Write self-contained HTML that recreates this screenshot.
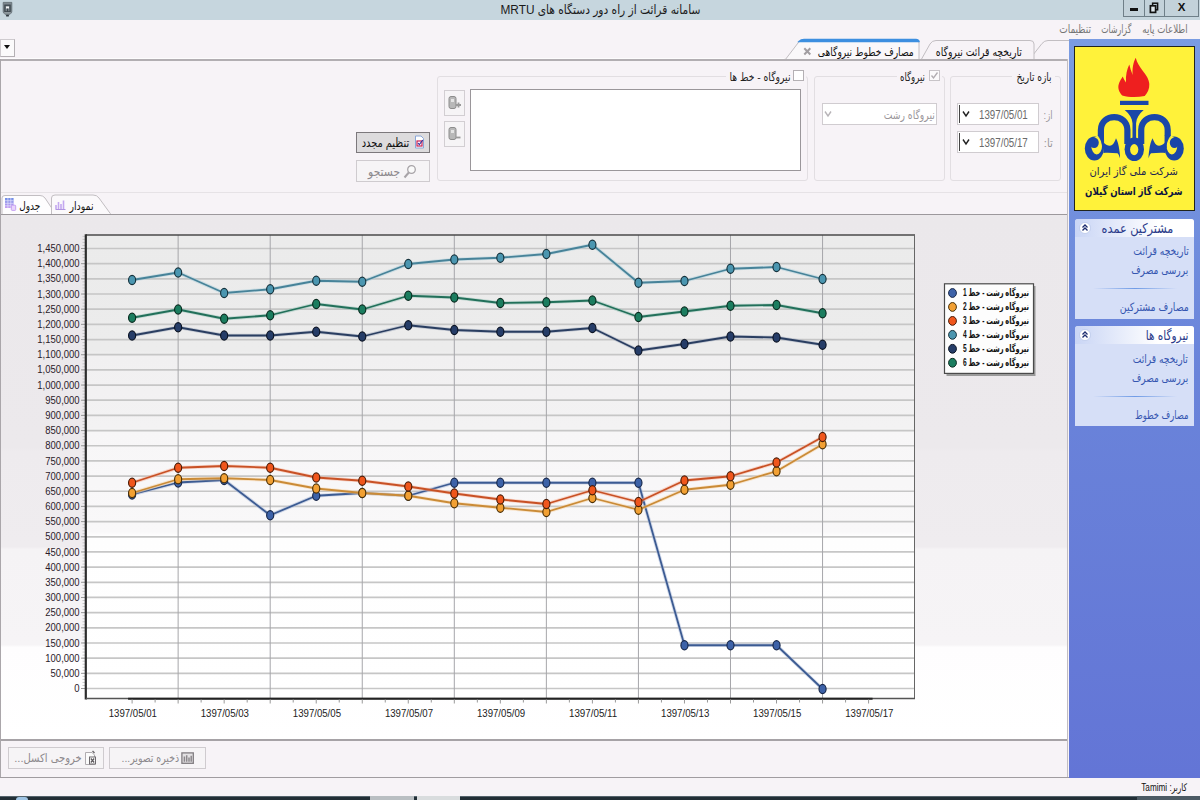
<!DOCTYPE html>
<html lang="fa">
<head>
<meta charset="utf-8">
<title>سامانه قرائت از راه دور دستگاه های MRTU</title>
<style>
html,body{margin:0;padding:0;}
body{width:1200px;height:800px;overflow:hidden;background:#f7f3f7;position:relative;
 font-family:"Liberation Sans","DejaVu Sans",sans-serif;font-size:11px;color:#222;}
.abs{position:absolute;}
.t{white-space:nowrap;height:16px;line-height:16px;font-size:11px;font-family:"Liberation Sans","DejaVu Sans Condensed","DejaVu Sans",sans-serif;}
.r{direction:rtl;transform-origin:100% 50%;}
.l{direction:ltr;transform-origin:0 50%;}
.rtl{direction:rtl;unicode-bidi:embed;}
.fa{font-family:"Liberation Sans","DejaVu Sans Condensed","DejaVu Sans",sans-serif;}
#titlebar{left:0;top:0;width:1200px;height:19.5px;background:#c6d6de;}
#title{left:400px;top:1px;width:400px;height:18px;line-height:18px;text-align:center;font-size:12px;color:#1a1a1a;direction:rtl;}
.wbtn{top:0;height:17px;background:#c3d2da;border:1px solid #6f7f88;border-top:none;box-sizing:border-box;}
#menubar{left:0;top:20px;width:1200px;height:18px;background:#f7f3f7;}
.menu{top:21px;height:16px;line-height:16px;font-size:11px;color:#777;direction:rtl;white-space:nowrap;}
#sidebar{left:1069.3px;top:39px;width:131px;height:739px;background:linear-gradient(#7a9ce2,#6a84da 45%,#6375d6);}
#logo{left:1074.3px;top:46px;width:120.5px;height:165.2px;background:#fff23a;border:1.4px solid #20241c;box-sizing:border-box;}
.panel{left:1075px;width:119px;background:#d6dff7;border-radius:3px 3px 0 0;}
.phead{left:0;top:0;width:119px;height:18px;border-radius:3px 3px 0 0;background:linear-gradient(to left,#ffffff,#ffffff 30%,#c9d5f5);}
.ptitle{right:6px;top:0;height:18px;line-height:18px;font-size:12px;color:#27408f;direction:rtl;white-space:nowrap;}
.pitem{right:6px;height:16px;line-height:16px;font-size:11px;color:#2f52b0;direction:rtl;white-space:nowrap;}
.psep{left:18px;width:84px;height:1px;background:linear-gradient(to right,rgba(120,160,230,0),#6f9be6,rgba(120,160,230,0));}
#statusbar{left:0;top:778px;width:1200px;height:18px;background:#f7f3f7;}
#taskbar{left:0;top:795.6px;width:1200px;height:4.4px;background:#222e36;border-top:1px solid #55636c;box-sizing:border-box;}
.gb{border:1px solid #e2dee2;border-radius:3px;box-sizing:border-box;}
.gbt{background:#f7f3f7;font-size:11px;color:#222;direction:rtl;white-space:nowrap;height:14px;line-height:14px;padding:0 2px;}
.inp{background:#fff;border:1px solid #d0ccd0;box-sizing:border-box;}
.btn{box-sizing:border-box;font-size:12px;direction:rtl;white-space:nowrap;text-align:center;}
svg.chart{position:absolute;left:0;top:0;}
svg.chart text{font-family:"Liberation Sans","DejaVu Sans",sans-serif;}
.yl{font-size:10px;fill:#2a1a2a;}
.xl{font-size:10px;fill:#222;}
.lg{font-size:10px;font-weight:bold;fill:#111;font-family:"Liberation Sans","DejaVu Sans Condensed","DejaVu Sans",sans-serif;}
</style>
</head>
<body>
<!-- title bar -->
<div id="titlebar" class="abs"></div>
<div class="abs t r" style="right:500px;top:2px;font-size:12px;color:#1a1a1a;transform:scale(0.988,1.06)">سامانه قرائت از راه دور دستگاه های MRTU</div>
<svg class="abs" style="left:0px;top:0px" width="16" height="19" viewBox="0 0 16 19"><path d="M3.2 2.4 H11.8 V11.5 C11.8 13.5 9.8 14.6 7.5 14.8 C5.2 14.6 3.2 13.5 3.2 11.5 Z" fill="#7d888f" stroke="#5d686f" stroke-width="0.8"/><rect x="4.9" y="5.2" width="5.2" height="6.6" fill="none" stroke="#3e484f" stroke-width="1.3"/><rect x="6" y="6.5" width="3" height="2" fill="#f4f6f7"/><rect x="6.9" y="8.6" width="1.3" height="3.2" fill="#3e484f"/><rect x="4.2" y="12" width="6.6" height="1.6" fill="#8f9aa0"/><ellipse cx="7.5" cy="15.7" rx="1.6" ry="0.9" fill="#2e383f"/></svg>
<div class="abs wbtn" style="left:1123px;width:22px;"></div>
<div class="abs wbtn" style="left:1144px;width:21px;"></div>
<div class="abs wbtn" style="left:1164px;width:35px;"></div>
<div class="abs" style="left:1130px;top:8px;width:8px;height:3px;background:#111;"></div>
<svg class="abs" style="left:1148px;top:1px" width="12" height="13" viewBox="0 0 12 13"><rect x="4.6" y="2.2" width="5" height="6.6" fill="none" stroke="#111" stroke-width="1.5"/><rect x="2.4" y="4.8" width="5.2" height="6.6" fill="#dfe7ec" stroke="#111" stroke-width="1.7"/></svg>
<div class="abs" style="left:1175px;top:0px;width:13px;height:15px;line-height:15px;font-size:11px;font-weight:bold;color:#111;text-align:center;transform:scale(1.05,0.95)">X</div>

<!-- menu bar -->
<div id="menubar" class="abs"></div>
<div class="abs t r" style="right:12px;top:21px;color:#747474;transform:scale(0.877,1.05)">اطلاعات پایه</div>
<div class="abs t r" style="right:68.7px;top:21px;color:#747474;transform:scale(0.783,1.05)">گزارشات</div>
<div class="abs t r" style="right:109.6px;top:21px;color:#747474;transform:scale(0.908,1.05)">تنظیمات</div>

<!-- sidebar -->
<div id="sidebar" class="abs"></div>
<div id="logo" class="abs"></div>
<svg class="abs" style="left:1075px;top:47px" width="120" height="163" viewBox="0 0 120 163">
 <path d="M47.2 48.5 C44 45 42.5 41 43.8 37 C44.5 34 46.5 32 47.7 29.5 C48.5 31.5 49.5 33.5 51 35.5 C50.5 28 52 22 54.3 17.5 C55 21 56.3 24.5 57.7 28 C57 21 58.5 15 60.7 10.7 C62 16 65 20 67.5 23.5 C71 28 74 32 74.3 37 C74.6 42 72.5 46 69.7 49 C62 50.6 54 50.5 47.2 48.5 Z" fill="#ee1f1f"/>
 <rect x="45" y="53.8" width="28.5" height="4.2" fill="#1a47a8"/>
 <path d="M49.7 63 L68.7 63 C64 67 61.5 71 61.1 76.3 L61.1 92 L57.5 92 L57.5 76.3 C57.1 71 54.5 67 49.7 63 Z" fill="#1a47a8"/>
 <g>
  <ellipse cx="19.4" cy="101.5" rx="9.6" ry="12" fill="#1a47a8"/>
  <ellipse cx="21.7" cy="98.6" rx="5.4" ry="8.8" fill="#fff23a"/>
  <ellipse cx="19.2" cy="95.7" rx="4.6" ry="5.2" fill="#1a47a8"/>
  <path d="M25.9 88.5 L25.9 83 C25.9 65.8 52.4 65.8 52.4 83 L52.4 97" fill="none" stroke="#1a47a8" stroke-width="6.2"/>
  <path d="M22.8 88 L29 88 L29.1 101 L27.1 101 C27.2 96.5 25.6 91.5 22.8 88.8 Z" fill="#1a47a8"/>
  <path d="M28.5 95.5 C32 99 35 99.5 37 98 C39 96.5 40 94 41 91.3 C42.5 94 43.8 98 44.3 103 C44.8 106 45.2 109 45 111.2 C44.2 108.8 43.5 107 42.5 106.3 C38 106 33 105.6 28.5 106 Z" fill="#1a47a8"/>
 </g>
 <g transform="translate(118.6,0) scale(-1,1)">
  <ellipse cx="19.4" cy="101.5" rx="9.6" ry="12" fill="#1a47a8"/>
  <ellipse cx="21.7" cy="98.6" rx="5.4" ry="8.8" fill="#fff23a"/>
  <ellipse cx="19.2" cy="95.7" rx="4.6" ry="5.2" fill="#1a47a8"/>
  <path d="M25.9 88.5 L25.9 83 C25.9 65.8 52.4 65.8 52.4 83 L52.4 97" fill="none" stroke="#1a47a8" stroke-width="6.2"/>
  <path d="M22.8 88 L29 88 L29.1 101 L27.1 101 C27.2 96.5 25.6 91.5 22.8 88.8 Z" fill="#1a47a8"/>
  <path d="M28.5 95.5 C32 99 35 99.5 37 98 C39 96.5 40 94 41 91.3 C42.5 94 43.8 98 44.3 103 C44.8 106 45.2 109 45 111.2 C44.2 108.8 43.5 107 42.5 106.3 C38 106 33 105.6 28.5 106 Z" fill="#1a47a8"/>
 </g>
 <ellipse cx="59.3" cy="102.3" rx="9.7" ry="11.8" fill="#1a47a8"/>
 <ellipse cx="59.2" cy="102.6" rx="4.1" ry="5.6" fill="#fff036"/>
 <text x="103" y="127.5" text-anchor="start" font-size="11" fill="#1c2450" direction="rtl" textLength="88.5" lengthAdjust="spacingAndGlyphs" style="font-family:'Liberation Sans','DejaVu Sans Condensed','DejaVu Sans',sans-serif">شرکت ملی گاز ایران</text>
 <text x="107.5" y="148" text-anchor="start" font-size="11" font-weight="bold" fill="#0c1440" direction="rtl" textLength="97.5" lengthAdjust="spacingAndGlyphs" style="font-family:'Liberation Sans','DejaVu Sans Condensed','DejaVu Sans',sans-serif">شرکت گاز استان گیلان</text>
</svg>

<div class="abs panel" style="top:219px;height:100px;">
 <div class="abs phead"></div>
 <div class="abs t r" style="right:20.5px;top:2px;font-size:13px;color:#2a3a8a;transform:scale(0.965,1.05)">مشترکین عمده</div>
 <svg class="abs" style="left:4px;top:3px" width="12" height="12" viewBox="0 0 12 12"><circle cx="6" cy="6" r="5.5" fill="#fff" stroke="#b8c6ea" stroke-width="0.8"/><path d="M3.5 5.5 L6 3 L8.5 5.5 M3.5 8.5 L6 6 L8.5 8.5" fill="none" stroke="#1c2c70" stroke-width="1.3"/></svg>
 <div class="abs t r" style="right:5.5px;top:24px;color:#3556b0;transform:scale(0.927,1.05)">تاریخچه قرائت</div>
 <div class="abs t r" style="right:5.5px;top:43px;color:#3556b0;transform:scale(0.916,1.05)">بررسی مصرف</div>
 <div class="abs psep" style="top:69px;"></div>
 <div class="abs t r" style="right:5.5px;top:80px;color:#3556b0;transform:scale(0.948,1.05)">مصارف مشترکین</div>
</div>
<div class="abs panel" style="top:326px;height:100px;">
 <div class="abs phead"></div>
 <div class="abs t r" style="right:6px;top:2px;font-size:13px;color:#2a3a8a;transform:scale(0.899,1.05)">نیروگاه ها</div>
 <svg class="abs" style="left:4px;top:3px" width="12" height="12" viewBox="0 0 12 12"><circle cx="6" cy="6" r="5.5" fill="#fff" stroke="#b8c6ea" stroke-width="0.8"/><path d="M3.5 5.5 L6 3 L8.5 5.5 M3.5 8.5 L6 6 L8.5 8.5" fill="none" stroke="#1c2c70" stroke-width="1.3"/></svg>
 <div class="abs t r" style="right:6px;top:25px;color:#3556b0;transform:scale(0.922,1.05)">تاریخچه قرائت</div>
 <div class="abs t r" style="right:6px;top:44px;color:#3556b0;transform:scale(0.902,1.05)">بررسی مصرف</div>
 <div class="abs psep" style="top:70px;"></div>
 <div class="abs t r" style="right:6px;top:81px;color:#3556b0;transform:scale(0.844,1.05)">مصارف خطوط</div>
</div>

<!-- top-left dropdown -->
<div class="abs" style="left:0;top:39px;width:15px;height:18px;background:#fbfafb;border:1px solid #cfcbcf;border-right-color:#b4b0b4;border-bottom-color:#b4b0b4;box-sizing:border-box;"></div>
<div class="abs" style="left:4.4px;top:45px;width:0;height:0;border-left:3.3px solid transparent;border-right:3.3px solid transparent;border-top:4.6px solid #111;"></div>

<!-- document tabs -->
<svg class="abs" style="left:780px;top:38px" width="290" height="23" viewBox="0 0 290 23">
 <path d="M249 22 L262 5.5 Q264.5 2.5 268 2.5 L289 2.5" fill="none" stroke="#c2bec2" stroke-width="1"/>
 <path d="M141 22 L150 6 Q152 2.5 156 2.5 L250 2.5 Q254 2.5 254 6 L254 22" fill="#f7f3f7" stroke="#c2bec2" stroke-width="1"/>
 <path d="M5 22 L18 5 Q20 2 24 2 L136 2 Q139 2 139 5 L139 22 Z" fill="#faf8fa" stroke="#c2bec2" stroke-width="1"/>
 <path d="M19 3.5 Q21 1.5 24 1.5 L136 1.5 Q138.5 1.5 139 3.5 Z" fill="#3d8fe0" stroke="#3d8fe0" stroke-width="1.5"/>
</svg>
<div class="abs t r" style="right:286.2px;top:44.3px;color:#111;transform:scale(0.925,1.05)">مصارف خطوط نیروگاهی</div>
<svg class="abs" style="left:802.5px;top:47px" width="9" height="9" viewBox="0 0 9 9"><path d="M1.3 1.3 L7.3 7.5 M7.3 1.3 L1.3 7.5" stroke="#a29ea2" stroke-width="2"/></svg>
<div class="abs t r" style="right:178px;top:44.3px;color:#111;transform:scale(0.937,1.05)">تاریخچه قرائت نیروگاه</div>

<!-- main content frame -->
<div class="abs" style="left:0;top:57.8px;width:784px;height:1.2px;background:#fdfcfd;"></div><div class="abs" style="left:0;top:59px;width:1068px;height:1.7px;background:#b2aeb2;"></div>
<div class="abs" style="left:0;top:59px;width:1.3px;height:718px;background:#aaa6aa;"></div>
<div class="abs" style="left:1067.2px;top:59px;width:1.2px;height:718px;background:#c2bec2;"></div>
<div class="abs" style="left:0;top:777px;width:1069px;height:1.5px;background:#a09ca0;"></div>

<!-- group: date range -->
<div class="abs gb" style="left:950px;top:76px;width:111px;height:105px;"></div>
<div class="abs" style="left:1012px;top:70px;width:43px;height:12px;background:#f7f3f7;"></div><div class="abs t r" style="right:148.7px;top:68.5px;color:#222;transform:scale(0.909,1.05)">بازه تاریخ</div>
<div class="abs inp" style="left:957px;top:103px;width:82px;height:22px;"></div>
<div class="abs inp" style="left:957px;top:131px;width:82px;height:22px;"></div>
<div class="abs" style="left:959px;top:105px;width:1px;height:18px;background:#444;"></div>
<div class="abs" style="left:959px;top:133px;width:1px;height:18px;background:#444;"></div>
<div class="abs t l" style="left:978.7px;top:107.3px;font-size:12px;color:#6a6a6a;transform:scale(0.812,1.02)">1397/05/01</div>
<div class="abs t l" style="left:978.7px;top:135.3px;font-size:12px;color:#6a6a6a;transform:scale(0.812,1.02)">1397/05/17</div>
<svg class="abs" style="left:962px;top:110px" width="8" height="8" viewBox="0 0 8 8"><path d="M1 1.5 L4 6 L7 1.5" fill="none" stroke="#222" stroke-width="1.4"/></svg>
<svg class="abs" style="left:962px;top:138px" width="8" height="8" viewBox="0 0 8 8"><path d="M1 1.5 L4 6 L7 1.5" fill="none" stroke="#222" stroke-width="1.4"/></svg>
<div class="abs t r" style="right:147.5px;top:107px;color:#9a969a;transform:scale(0.850,1.05)">از:</div>
<div class="abs t r" style="right:147.5px;top:135px;color:#9a969a;transform:scale(1.019,1.05)">تا:</div>

<!-- group: power plant -->
<div class="abs gb" style="left:814px;top:76px;width:131px;height:105px;"></div>
<div class="abs" style="left:897px;top:70px;width:45px;height:12px;background:#f7f3f7;"></div><div class="abs t r" style="right:275px;top:68.5px;color:#222;transform:scale(0.865,1.05)">نیروگاه</div>
<div class="abs" style="left:929px;top:70px;width:11px;height:11px;background:#fbfafb;border:1px solid #c8c4c8;box-sizing:border-box;"></div>
<svg class="abs" style="left:930px;top:71px" width="9" height="9" viewBox="0 0 9 9"><path d="M1.5 4.5 L3.5 7 L7.5 1.5" fill="none" stroke="#b0acb0" stroke-width="1.3"/></svg>
<div class="abs inp" style="left:822px;top:103px;width:115px;height:22px;"></div>
<div class="abs t r" style="right:265px;top:107px;color:#9a969a;transform:scale(0.932,1.05)">نیروگاه رشت</div>
<svg class="abs" style="left:824px;top:110px" width="8" height="8" viewBox="0 0 8 8"><path d="M1 1.5 L4 6 L7 1.5" fill="none" stroke="#b8b4b8" stroke-width="1.4"/></svg>

<!-- group: plant lines -->
<div class="abs gb" style="left:437px;top:76px;width:371px;height:105px;"></div>
<div class="abs" style="left:726px;top:70px;width:80px;height:12px;background:#f7f3f7;"></div><div class="abs t r" style="right:410px;top:68.5px;color:#222;transform:scale(0.932,1.05)">نیروگاه - خط ها</div>
<div class="abs" style="left:793px;top:70px;width:11px;height:11px;background:#fff;border:1px solid #b4b0b4;box-sizing:border-box;"></div>
<div class="abs" style="left:470px;top:89px;width:331px;height:82px;background:#fff;border:1px solid #9a969a;box-sizing:border-box;"></div>
<div class="abs" style="left:444px;top:90px;width:21px;height:26px;background:#f6f4f6;border:1px solid #d2ced2;box-sizing:border-box;"></div>
<div class="abs" style="left:444px;top:121px;width:21px;height:26px;background:#f6f4f6;border:1px solid #d2ced2;box-sizing:border-box;"></div>
<svg class="abs" style="left:447px;top:95px" width="15" height="16" viewBox="0 0 15 16"><rect x="2" y="1.5" width="7" height="12" rx="2" fill="#b8b8b8" stroke="#8c8c8c"/><rect x="4" y="4" width="3" height="3" fill="#e4e4e4"/><path d="M9 10 h5 M11.5 7.5 v5" stroke="#9a9a9a" stroke-width="1.8"/></svg>
<svg class="abs" style="left:447px;top:126px" width="15" height="16" viewBox="0 0 15 16"><rect x="2" y="1.5" width="7" height="12" rx="2" fill="#b8b8b8" stroke="#8c8c8c"/><rect x="4" y="4" width="3" height="3" fill="#e4e4e4"/><path d="M9 11.5 h4.5" stroke="#9a9a9a" stroke-width="1.8"/></svg>

<!-- buttons -->
<div class="abs btn" style="left:356px;top:132px;width:74px;height:21px;background:#dddbdd;border:1px solid #7c787c;"></div>
<div class="abs t r" style="right:791.2px;top:135px;color:#111;font-size:12px;transform:scale(0.911,1.05)">تنظیم مجدد</div>
<svg class="abs" style="left:414px;top:135px" width="11" height="14" viewBox="0 0 11 14"><path d="M1.5 1 H7 L9.5 3.5 V13 H1.5 Z" fill="#fff" stroke="#8aa6d8" stroke-width="1"/><rect x="3" y="6" width="5" height="5" fill="none" stroke="#c81e50" stroke-width="1.2"/><path d="M4 8 L5.3 9.6 L8.8 5" fill="none" stroke="#3030a0" stroke-width="1.1"/></svg>
<div class="abs btn" style="left:356px;top:160px;width:74px;height:22px;background:#f6f4f6;border:1px solid #cfcbcf;"></div>
<div class="abs t r" style="right:799.5px;top:164px;color:#8c888c;font-size:12px;transform:scale(0.997,1.05)">جستجو</div>
<svg class="abs" style="left:403px;top:164px" width="14" height="15" viewBox="0 0 14 15"><circle cx="8.5" cy="5.5" r="3.8" fill="#fafafa" stroke="#a8a4a8" stroke-width="1.3"/><path d="M5.8 8.5 L1.5 13.5" stroke="#a8a4a8" stroke-width="2"/></svg>

<!-- inner tabs -->
<div class="abs" style="left:1px;top:192px;width:1066px;height:1px;background:#e6e2e6;"></div>
<svg class="abs" style="left:0;top:193px" width="130" height="23" viewBox="0 0 130 23">
 <path d="M2 21.5 L2 5 Q2 2.5 5 2.5 L40 2.5 Q43 2.5 45 5 L56 21.5" fill="#fefdfe" stroke="#c2bec2" stroke-width="1"/>
 <path d="M51.5 21.5 L51.5 5 Q51.5 2 55 2 L93 2 Q97 2 99 5 L111 21.5 Z" fill="#fbf9fb" stroke="#c2bec2" stroke-width="1"/>
 <path d="M52 21.5 L110.5 21.5" stroke="#fbf9fb" stroke-width="1.5"/>
</svg>
<div class="abs t r" style="right:1159.4px;top:197.5px;color:#111;transform:scale(0.901,1.05)">جدول</div>
<svg class="abs" style="left:4px;top:197px" width="13" height="15" viewBox="0 0 13 15"><defs><linearGradient id="tg" x1="0" y1="0" x2="0" y2="1"><stop offset="0" stop-color="#6f8fe6"/><stop offset="1" stop-color="#c79cf2"/></linearGradient></defs><rect x="1" y="1" width="8.6" height="10" fill="url(#tg)"/><path d="M1 3.7 h8.6 M1 6.3 h8.6 M1 8.8 h8.6 M3.9 1 v10 M6.8 1 v10" stroke="#e6e2fa" stroke-width="0.7"/><rect x="7.3" y="8.2" width="4.4" height="5.2" rx="0.8" fill="#e9d4fb" stroke="#c29af0" stroke-width="0.9"/></svg>
<div class="abs t r" style="right:1106.4px;top:197.5px;color:#111;transform:scale(0.940,1.05)">نمودار</div>
<svg class="abs" style="left:55px;top:199px" width="11" height="11" viewBox="0 0 11 11"><path d="M1 10 V6 M3.5 10 V3 M6 10 V5 M8.5 10 V1.5" stroke="#c4a8f0" stroke-width="1.6"/><path d="M0.5 10.5 H10.5" stroke="#b094e0" stroke-width="1"/></svg>

<!-- chart panel -->
<div class="abs" style="left:1px;top:214px;width:1066px;height:1.3px;background:#9c989c;"></div>
<div class="abs" style="left:1.3px;top:215px;width:1065.7px;height:524px;background:linear-gradient(#ebe8eb 0%,#ece9ec 44.5%,#eeebee 45%,#efecef 63.3%,#f5f3f5 63.8%,#f6f4f6 82%,#fefdfe 82.5%,#ffffff 100%);"></div>
<div class="abs" style="left:1px;top:739px;width:1066px;height:1.5px;background:#a6a2a6;"></div>
<svg class="chart" width="1200" height="800" viewBox="0 0 1200 800">
<defs><linearGradient id="pg" x1="0" y1="0" x2="0" y2="1"><stop offset="0" stop-color="#ebebeb"/><stop offset="0.25" stop-color="#ececec"/><stop offset="0.262" stop-color="#f1f0f1"/><stop offset="0.415" stop-color="#f3f2f3"/><stop offset="0.425" stop-color="#f7f6f7"/><stop offset="0.64" stop-color="#f9f8f9"/><stop offset="0.65" stop-color="#fefefe"/><stop offset="1" stop-color="#ffffff"/></linearGradient></defs>
<rect x="86" y="235" width="829" height="463.5" fill="url(#pg)"/>
<line x1="86" x2="915" y1="688.50" y2="688.50" stroke="#c6c6c6" stroke-width="1.7"/>
<line x1="86" x2="915" y1="673.33" y2="673.33" stroke="#c6c6c6" stroke-width="1.7"/>
<line x1="86" x2="915" y1="658.16" y2="658.16" stroke="#c6c6c6" stroke-width="1.7"/>
<line x1="86" x2="915" y1="642.98" y2="642.98" stroke="#c6c6c6" stroke-width="1.7"/>
<line x1="86" x2="915" y1="627.81" y2="627.81" stroke="#c6c6c6" stroke-width="1.7"/>
<line x1="86" x2="915" y1="612.64" y2="612.64" stroke="#c6c6c6" stroke-width="1.7"/>
<line x1="86" x2="915" y1="597.47" y2="597.47" stroke="#c6c6c6" stroke-width="1.7"/>
<line x1="86" x2="915" y1="582.29" y2="582.29" stroke="#c6c6c6" stroke-width="1.7"/>
<line x1="86" x2="915" y1="567.12" y2="567.12" stroke="#c6c6c6" stroke-width="1.7"/>
<line x1="86" x2="915" y1="551.95" y2="551.95" stroke="#c6c6c6" stroke-width="1.7"/>
<line x1="86" x2="915" y1="536.78" y2="536.78" stroke="#c6c6c6" stroke-width="1.7"/>
<line x1="86" x2="915" y1="521.60" y2="521.60" stroke="#c6c6c6" stroke-width="1.7"/>
<line x1="86" x2="915" y1="506.43" y2="506.43" stroke="#c6c6c6" stroke-width="1.7"/>
<line x1="86" x2="915" y1="491.26" y2="491.26" stroke="#c6c6c6" stroke-width="1.7"/>
<line x1="86" x2="915" y1="476.09" y2="476.09" stroke="#c6c6c6" stroke-width="1.7"/>
<line x1="86" x2="915" y1="460.91" y2="460.91" stroke="#c6c6c6" stroke-width="1.7"/>
<line x1="86" x2="915" y1="445.74" y2="445.74" stroke="#c6c6c6" stroke-width="1.7"/>
<line x1="86" x2="915" y1="430.57" y2="430.57" stroke="#c6c6c6" stroke-width="1.7"/>
<line x1="86" x2="915" y1="415.40" y2="415.40" stroke="#c6c6c6" stroke-width="1.7"/>
<line x1="86" x2="915" y1="400.22" y2="400.22" stroke="#c6c6c6" stroke-width="1.7"/>
<line x1="86" x2="915" y1="385.05" y2="385.05" stroke="#c6c6c6" stroke-width="1.7"/>
<line x1="86" x2="915" y1="369.88" y2="369.88" stroke="#c6c6c6" stroke-width="1.7"/>
<line x1="86" x2="915" y1="354.71" y2="354.71" stroke="#c6c6c6" stroke-width="1.7"/>
<line x1="86" x2="915" y1="339.53" y2="339.53" stroke="#c6c6c6" stroke-width="1.7"/>
<line x1="86" x2="915" y1="324.36" y2="324.36" stroke="#c6c6c6" stroke-width="1.7"/>
<line x1="86" x2="915" y1="309.19" y2="309.19" stroke="#c6c6c6" stroke-width="1.7"/>
<line x1="86" x2="915" y1="294.02" y2="294.02" stroke="#c6c6c6" stroke-width="1.7"/>
<line x1="86" x2="915" y1="278.84" y2="278.84" stroke="#c6c6c6" stroke-width="1.7"/>
<line x1="86" x2="915" y1="263.67" y2="263.67" stroke="#c6c6c6" stroke-width="1.7"/>
<line x1="86" x2="915" y1="248.50" y2="248.50" stroke="#c6c6c6" stroke-width="1.7"/>
<line x1="178.13" x2="178.13" y1="235" y2="698.5" stroke="#a6a6aa" stroke-width="1"/>
<line x1="270.19" x2="270.19" y1="235" y2="698.5" stroke="#a6a6aa" stroke-width="1"/>
<line x1="362.25" x2="362.25" y1="235" y2="698.5" stroke="#a6a6aa" stroke-width="1"/>
<line x1="454.31" x2="454.31" y1="235" y2="698.5" stroke="#a6a6aa" stroke-width="1"/>
<line x1="546.37" x2="546.37" y1="235" y2="698.5" stroke="#a6a6aa" stroke-width="1"/>
<line x1="638.43" x2="638.43" y1="235" y2="698.5" stroke="#a6a6aa" stroke-width="1"/>
<line x1="730.49" x2="730.49" y1="235" y2="698.5" stroke="#a6a6aa" stroke-width="1"/>
<line x1="822.55" x2="822.55" y1="235" y2="698.5" stroke="#a6a6aa" stroke-width="1"/>
<line x1="82.5" x2="85" y1="688.50" y2="688.50" stroke="#bdbdbd" stroke-width="0.8"/>
<line x1="82.5" x2="85" y1="685.47" y2="685.47" stroke="#bdbdbd" stroke-width="0.8"/>
<line x1="82.5" x2="85" y1="682.43" y2="682.43" stroke="#bdbdbd" stroke-width="0.8"/>
<line x1="82.5" x2="85" y1="679.40" y2="679.40" stroke="#bdbdbd" stroke-width="0.8"/>
<line x1="82.5" x2="85" y1="676.36" y2="676.36" stroke="#bdbdbd" stroke-width="0.8"/>
<line x1="82.5" x2="85" y1="673.33" y2="673.33" stroke="#bdbdbd" stroke-width="0.8"/>
<line x1="82.5" x2="85" y1="670.29" y2="670.29" stroke="#bdbdbd" stroke-width="0.8"/>
<line x1="82.5" x2="85" y1="667.26" y2="667.26" stroke="#bdbdbd" stroke-width="0.8"/>
<line x1="82.5" x2="85" y1="664.22" y2="664.22" stroke="#bdbdbd" stroke-width="0.8"/>
<line x1="82.5" x2="85" y1="661.19" y2="661.19" stroke="#bdbdbd" stroke-width="0.8"/>
<line x1="82.5" x2="85" y1="658.16" y2="658.16" stroke="#bdbdbd" stroke-width="0.8"/>
<line x1="82.5" x2="85" y1="655.12" y2="655.12" stroke="#bdbdbd" stroke-width="0.8"/>
<line x1="82.5" x2="85" y1="652.09" y2="652.09" stroke="#bdbdbd" stroke-width="0.8"/>
<line x1="82.5" x2="85" y1="649.05" y2="649.05" stroke="#bdbdbd" stroke-width="0.8"/>
<line x1="82.5" x2="85" y1="646.02" y2="646.02" stroke="#bdbdbd" stroke-width="0.8"/>
<line x1="82.5" x2="85" y1="642.98" y2="642.98" stroke="#bdbdbd" stroke-width="0.8"/>
<line x1="82.5" x2="85" y1="639.95" y2="639.95" stroke="#bdbdbd" stroke-width="0.8"/>
<line x1="82.5" x2="85" y1="636.91" y2="636.91" stroke="#bdbdbd" stroke-width="0.8"/>
<line x1="82.5" x2="85" y1="633.88" y2="633.88" stroke="#bdbdbd" stroke-width="0.8"/>
<line x1="82.5" x2="85" y1="630.84" y2="630.84" stroke="#bdbdbd" stroke-width="0.8"/>
<line x1="82.5" x2="85" y1="627.81" y2="627.81" stroke="#bdbdbd" stroke-width="0.8"/>
<line x1="82.5" x2="85" y1="624.78" y2="624.78" stroke="#bdbdbd" stroke-width="0.8"/>
<line x1="82.5" x2="85" y1="621.74" y2="621.74" stroke="#bdbdbd" stroke-width="0.8"/>
<line x1="82.5" x2="85" y1="618.71" y2="618.71" stroke="#bdbdbd" stroke-width="0.8"/>
<line x1="82.5" x2="85" y1="615.67" y2="615.67" stroke="#bdbdbd" stroke-width="0.8"/>
<line x1="82.5" x2="85" y1="612.64" y2="612.64" stroke="#bdbdbd" stroke-width="0.8"/>
<line x1="82.5" x2="85" y1="609.60" y2="609.60" stroke="#bdbdbd" stroke-width="0.8"/>
<line x1="82.5" x2="85" y1="606.57" y2="606.57" stroke="#bdbdbd" stroke-width="0.8"/>
<line x1="82.5" x2="85" y1="603.53" y2="603.53" stroke="#bdbdbd" stroke-width="0.8"/>
<line x1="82.5" x2="85" y1="600.50" y2="600.50" stroke="#bdbdbd" stroke-width="0.8"/>
<line x1="82.5" x2="85" y1="597.47" y2="597.47" stroke="#bdbdbd" stroke-width="0.8"/>
<line x1="82.5" x2="85" y1="594.43" y2="594.43" stroke="#bdbdbd" stroke-width="0.8"/>
<line x1="82.5" x2="85" y1="591.40" y2="591.40" stroke="#bdbdbd" stroke-width="0.8"/>
<line x1="82.5" x2="85" y1="588.36" y2="588.36" stroke="#bdbdbd" stroke-width="0.8"/>
<line x1="82.5" x2="85" y1="585.33" y2="585.33" stroke="#bdbdbd" stroke-width="0.8"/>
<line x1="82.5" x2="85" y1="582.29" y2="582.29" stroke="#bdbdbd" stroke-width="0.8"/>
<line x1="82.5" x2="85" y1="579.26" y2="579.26" stroke="#bdbdbd" stroke-width="0.8"/>
<line x1="82.5" x2="85" y1="576.22" y2="576.22" stroke="#bdbdbd" stroke-width="0.8"/>
<line x1="82.5" x2="85" y1="573.19" y2="573.19" stroke="#bdbdbd" stroke-width="0.8"/>
<line x1="82.5" x2="85" y1="570.16" y2="570.16" stroke="#bdbdbd" stroke-width="0.8"/>
<line x1="82.5" x2="85" y1="567.12" y2="567.12" stroke="#bdbdbd" stroke-width="0.8"/>
<line x1="82.5" x2="85" y1="564.09" y2="564.09" stroke="#bdbdbd" stroke-width="0.8"/>
<line x1="82.5" x2="85" y1="561.05" y2="561.05" stroke="#bdbdbd" stroke-width="0.8"/>
<line x1="82.5" x2="85" y1="558.02" y2="558.02" stroke="#bdbdbd" stroke-width="0.8"/>
<line x1="82.5" x2="85" y1="554.98" y2="554.98" stroke="#bdbdbd" stroke-width="0.8"/>
<line x1="82.5" x2="85" y1="551.95" y2="551.95" stroke="#bdbdbd" stroke-width="0.8"/>
<line x1="82.5" x2="85" y1="548.91" y2="548.91" stroke="#bdbdbd" stroke-width="0.8"/>
<line x1="82.5" x2="85" y1="545.88" y2="545.88" stroke="#bdbdbd" stroke-width="0.8"/>
<line x1="82.5" x2="85" y1="542.84" y2="542.84" stroke="#bdbdbd" stroke-width="0.8"/>
<line x1="82.5" x2="85" y1="539.81" y2="539.81" stroke="#bdbdbd" stroke-width="0.8"/>
<line x1="82.5" x2="85" y1="536.78" y2="536.78" stroke="#bdbdbd" stroke-width="0.8"/>
<line x1="82.5" x2="85" y1="533.74" y2="533.74" stroke="#bdbdbd" stroke-width="0.8"/>
<line x1="82.5" x2="85" y1="530.71" y2="530.71" stroke="#bdbdbd" stroke-width="0.8"/>
<line x1="82.5" x2="85" y1="527.67" y2="527.67" stroke="#bdbdbd" stroke-width="0.8"/>
<line x1="82.5" x2="85" y1="524.64" y2="524.64" stroke="#bdbdbd" stroke-width="0.8"/>
<line x1="82.5" x2="85" y1="521.60" y2="521.60" stroke="#bdbdbd" stroke-width="0.8"/>
<line x1="82.5" x2="85" y1="518.57" y2="518.57" stroke="#bdbdbd" stroke-width="0.8"/>
<line x1="82.5" x2="85" y1="515.53" y2="515.53" stroke="#bdbdbd" stroke-width="0.8"/>
<line x1="82.5" x2="85" y1="512.50" y2="512.50" stroke="#bdbdbd" stroke-width="0.8"/>
<line x1="82.5" x2="85" y1="509.47" y2="509.47" stroke="#bdbdbd" stroke-width="0.8"/>
<line x1="82.5" x2="85" y1="506.43" y2="506.43" stroke="#bdbdbd" stroke-width="0.8"/>
<line x1="82.5" x2="85" y1="503.40" y2="503.40" stroke="#bdbdbd" stroke-width="0.8"/>
<line x1="82.5" x2="85" y1="500.36" y2="500.36" stroke="#bdbdbd" stroke-width="0.8"/>
<line x1="82.5" x2="85" y1="497.33" y2="497.33" stroke="#bdbdbd" stroke-width="0.8"/>
<line x1="82.5" x2="85" y1="494.29" y2="494.29" stroke="#bdbdbd" stroke-width="0.8"/>
<line x1="82.5" x2="85" y1="491.26" y2="491.26" stroke="#bdbdbd" stroke-width="0.8"/>
<line x1="82.5" x2="85" y1="488.22" y2="488.22" stroke="#bdbdbd" stroke-width="0.8"/>
<line x1="82.5" x2="85" y1="485.19" y2="485.19" stroke="#bdbdbd" stroke-width="0.8"/>
<line x1="82.5" x2="85" y1="482.16" y2="482.16" stroke="#bdbdbd" stroke-width="0.8"/>
<line x1="82.5" x2="85" y1="479.12" y2="479.12" stroke="#bdbdbd" stroke-width="0.8"/>
<line x1="82.5" x2="85" y1="476.09" y2="476.09" stroke="#bdbdbd" stroke-width="0.8"/>
<line x1="82.5" x2="85" y1="473.05" y2="473.05" stroke="#bdbdbd" stroke-width="0.8"/>
<line x1="82.5" x2="85" y1="470.02" y2="470.02" stroke="#bdbdbd" stroke-width="0.8"/>
<line x1="82.5" x2="85" y1="466.98" y2="466.98" stroke="#bdbdbd" stroke-width="0.8"/>
<line x1="82.5" x2="85" y1="463.95" y2="463.95" stroke="#bdbdbd" stroke-width="0.8"/>
<line x1="82.5" x2="85" y1="460.91" y2="460.91" stroke="#bdbdbd" stroke-width="0.8"/>
<line x1="82.5" x2="85" y1="457.88" y2="457.88" stroke="#bdbdbd" stroke-width="0.8"/>
<line x1="82.5" x2="85" y1="454.84" y2="454.84" stroke="#bdbdbd" stroke-width="0.8"/>
<line x1="82.5" x2="85" y1="451.81" y2="451.81" stroke="#bdbdbd" stroke-width="0.8"/>
<line x1="82.5" x2="85" y1="448.78" y2="448.78" stroke="#bdbdbd" stroke-width="0.8"/>
<line x1="82.5" x2="85" y1="445.74" y2="445.74" stroke="#bdbdbd" stroke-width="0.8"/>
<line x1="82.5" x2="85" y1="442.71" y2="442.71" stroke="#bdbdbd" stroke-width="0.8"/>
<line x1="82.5" x2="85" y1="439.67" y2="439.67" stroke="#bdbdbd" stroke-width="0.8"/>
<line x1="82.5" x2="85" y1="436.64" y2="436.64" stroke="#bdbdbd" stroke-width="0.8"/>
<line x1="82.5" x2="85" y1="433.60" y2="433.60" stroke="#bdbdbd" stroke-width="0.8"/>
<line x1="82.5" x2="85" y1="430.57" y2="430.57" stroke="#bdbdbd" stroke-width="0.8"/>
<line x1="82.5" x2="85" y1="427.53" y2="427.53" stroke="#bdbdbd" stroke-width="0.8"/>
<line x1="82.5" x2="85" y1="424.50" y2="424.50" stroke="#bdbdbd" stroke-width="0.8"/>
<line x1="82.5" x2="85" y1="421.47" y2="421.47" stroke="#bdbdbd" stroke-width="0.8"/>
<line x1="82.5" x2="85" y1="418.43" y2="418.43" stroke="#bdbdbd" stroke-width="0.8"/>
<line x1="82.5" x2="85" y1="415.40" y2="415.40" stroke="#bdbdbd" stroke-width="0.8"/>
<line x1="82.5" x2="85" y1="412.36" y2="412.36" stroke="#bdbdbd" stroke-width="0.8"/>
<line x1="82.5" x2="85" y1="409.33" y2="409.33" stroke="#bdbdbd" stroke-width="0.8"/>
<line x1="82.5" x2="85" y1="406.29" y2="406.29" stroke="#bdbdbd" stroke-width="0.8"/>
<line x1="82.5" x2="85" y1="403.26" y2="403.26" stroke="#bdbdbd" stroke-width="0.8"/>
<line x1="82.5" x2="85" y1="400.22" y2="400.22" stroke="#bdbdbd" stroke-width="0.8"/>
<line x1="82.5" x2="85" y1="397.19" y2="397.19" stroke="#bdbdbd" stroke-width="0.8"/>
<line x1="82.5" x2="85" y1="394.16" y2="394.16" stroke="#bdbdbd" stroke-width="0.8"/>
<line x1="82.5" x2="85" y1="391.12" y2="391.12" stroke="#bdbdbd" stroke-width="0.8"/>
<line x1="82.5" x2="85" y1="388.09" y2="388.09" stroke="#bdbdbd" stroke-width="0.8"/>
<line x1="82.5" x2="85" y1="385.05" y2="385.05" stroke="#bdbdbd" stroke-width="0.8"/>
<line x1="82.5" x2="85" y1="382.02" y2="382.02" stroke="#bdbdbd" stroke-width="0.8"/>
<line x1="82.5" x2="85" y1="378.98" y2="378.98" stroke="#bdbdbd" stroke-width="0.8"/>
<line x1="82.5" x2="85" y1="375.95" y2="375.95" stroke="#bdbdbd" stroke-width="0.8"/>
<line x1="82.5" x2="85" y1="372.91" y2="372.91" stroke="#bdbdbd" stroke-width="0.8"/>
<line x1="82.5" x2="85" y1="369.88" y2="369.88" stroke="#bdbdbd" stroke-width="0.8"/>
<line x1="82.5" x2="85" y1="366.84" y2="366.84" stroke="#bdbdbd" stroke-width="0.8"/>
<line x1="82.5" x2="85" y1="363.81" y2="363.81" stroke="#bdbdbd" stroke-width="0.8"/>
<line x1="82.5" x2="85" y1="360.78" y2="360.78" stroke="#bdbdbd" stroke-width="0.8"/>
<line x1="82.5" x2="85" y1="357.74" y2="357.74" stroke="#bdbdbd" stroke-width="0.8"/>
<line x1="82.5" x2="85" y1="354.71" y2="354.71" stroke="#bdbdbd" stroke-width="0.8"/>
<line x1="82.5" x2="85" y1="351.67" y2="351.67" stroke="#bdbdbd" stroke-width="0.8"/>
<line x1="82.5" x2="85" y1="348.64" y2="348.64" stroke="#bdbdbd" stroke-width="0.8"/>
<line x1="82.5" x2="85" y1="345.60" y2="345.60" stroke="#bdbdbd" stroke-width="0.8"/>
<line x1="82.5" x2="85" y1="342.57" y2="342.57" stroke="#bdbdbd" stroke-width="0.8"/>
<line x1="82.5" x2="85" y1="339.53" y2="339.53" stroke="#bdbdbd" stroke-width="0.8"/>
<line x1="82.5" x2="85" y1="336.50" y2="336.50" stroke="#bdbdbd" stroke-width="0.8"/>
<line x1="82.5" x2="85" y1="333.47" y2="333.47" stroke="#bdbdbd" stroke-width="0.8"/>
<line x1="82.5" x2="85" y1="330.43" y2="330.43" stroke="#bdbdbd" stroke-width="0.8"/>
<line x1="82.5" x2="85" y1="327.40" y2="327.40" stroke="#bdbdbd" stroke-width="0.8"/>
<line x1="82.5" x2="85" y1="324.36" y2="324.36" stroke="#bdbdbd" stroke-width="0.8"/>
<line x1="82.5" x2="85" y1="321.33" y2="321.33" stroke="#bdbdbd" stroke-width="0.8"/>
<line x1="82.5" x2="85" y1="318.29" y2="318.29" stroke="#bdbdbd" stroke-width="0.8"/>
<line x1="82.5" x2="85" y1="315.26" y2="315.26" stroke="#bdbdbd" stroke-width="0.8"/>
<line x1="82.5" x2="85" y1="312.22" y2="312.22" stroke="#bdbdbd" stroke-width="0.8"/>
<line x1="82.5" x2="85" y1="309.19" y2="309.19" stroke="#bdbdbd" stroke-width="0.8"/>
<line x1="82.5" x2="85" y1="306.16" y2="306.16" stroke="#bdbdbd" stroke-width="0.8"/>
<line x1="82.5" x2="85" y1="303.12" y2="303.12" stroke="#bdbdbd" stroke-width="0.8"/>
<line x1="82.5" x2="85" y1="300.09" y2="300.09" stroke="#bdbdbd" stroke-width="0.8"/>
<line x1="82.5" x2="85" y1="297.05" y2="297.05" stroke="#bdbdbd" stroke-width="0.8"/>
<line x1="82.5" x2="85" y1="294.02" y2="294.02" stroke="#bdbdbd" stroke-width="0.8"/>
<line x1="82.5" x2="85" y1="290.98" y2="290.98" stroke="#bdbdbd" stroke-width="0.8"/>
<line x1="82.5" x2="85" y1="287.95" y2="287.95" stroke="#bdbdbd" stroke-width="0.8"/>
<line x1="82.5" x2="85" y1="284.91" y2="284.91" stroke="#bdbdbd" stroke-width="0.8"/>
<line x1="82.5" x2="85" y1="281.88" y2="281.88" stroke="#bdbdbd" stroke-width="0.8"/>
<line x1="82.5" x2="85" y1="278.84" y2="278.84" stroke="#bdbdbd" stroke-width="0.8"/>
<line x1="82.5" x2="85" y1="275.81" y2="275.81" stroke="#bdbdbd" stroke-width="0.8"/>
<line x1="82.5" x2="85" y1="272.78" y2="272.78" stroke="#bdbdbd" stroke-width="0.8"/>
<line x1="82.5" x2="85" y1="269.74" y2="269.74" stroke="#bdbdbd" stroke-width="0.8"/>
<line x1="82.5" x2="85" y1="266.71" y2="266.71" stroke="#bdbdbd" stroke-width="0.8"/>
<line x1="82.5" x2="85" y1="263.67" y2="263.67" stroke="#bdbdbd" stroke-width="0.8"/>
<line x1="82.5" x2="85" y1="260.64" y2="260.64" stroke="#bdbdbd" stroke-width="0.8"/>
<line x1="82.5" x2="85" y1="257.60" y2="257.60" stroke="#bdbdbd" stroke-width="0.8"/>
<line x1="82.5" x2="85" y1="254.57" y2="254.57" stroke="#bdbdbd" stroke-width="0.8"/>
<line x1="82.5" x2="85" y1="251.53" y2="251.53" stroke="#bdbdbd" stroke-width="0.8"/>
<line x1="82.5" x2="85" y1="248.50" y2="248.50" stroke="#bdbdbd" stroke-width="0.8"/>
<line x1="82.5" x2="85" y1="245.47" y2="245.47" stroke="#bdbdbd" stroke-width="0.8"/>
<line x1="82.5" x2="85" y1="242.43" y2="242.43" stroke="#bdbdbd" stroke-width="0.8"/>
<line x1="82.5" x2="85" y1="239.40" y2="239.40" stroke="#bdbdbd" stroke-width="0.8"/>
<line x1="82.5" x2="85" y1="236.36" y2="236.36" stroke="#bdbdbd" stroke-width="0.8"/>
<line x1="81" x2="85" y1="688.50" y2="688.50" stroke="#999" stroke-width="1"/>
<line x1="81" x2="85" y1="673.33" y2="673.33" stroke="#999" stroke-width="1"/>
<line x1="81" x2="85" y1="658.16" y2="658.16" stroke="#999" stroke-width="1"/>
<line x1="81" x2="85" y1="642.98" y2="642.98" stroke="#999" stroke-width="1"/>
<line x1="81" x2="85" y1="627.81" y2="627.81" stroke="#999" stroke-width="1"/>
<line x1="81" x2="85" y1="612.64" y2="612.64" stroke="#999" stroke-width="1"/>
<line x1="81" x2="85" y1="597.47" y2="597.47" stroke="#999" stroke-width="1"/>
<line x1="81" x2="85" y1="582.29" y2="582.29" stroke="#999" stroke-width="1"/>
<line x1="81" x2="85" y1="567.12" y2="567.12" stroke="#999" stroke-width="1"/>
<line x1="81" x2="85" y1="551.95" y2="551.95" stroke="#999" stroke-width="1"/>
<line x1="81" x2="85" y1="536.78" y2="536.78" stroke="#999" stroke-width="1"/>
<line x1="81" x2="85" y1="521.60" y2="521.60" stroke="#999" stroke-width="1"/>
<line x1="81" x2="85" y1="506.43" y2="506.43" stroke="#999" stroke-width="1"/>
<line x1="81" x2="85" y1="491.26" y2="491.26" stroke="#999" stroke-width="1"/>
<line x1="81" x2="85" y1="476.09" y2="476.09" stroke="#999" stroke-width="1"/>
<line x1="81" x2="85" y1="460.91" y2="460.91" stroke="#999" stroke-width="1"/>
<line x1="81" x2="85" y1="445.74" y2="445.74" stroke="#999" stroke-width="1"/>
<line x1="81" x2="85" y1="430.57" y2="430.57" stroke="#999" stroke-width="1"/>
<line x1="81" x2="85" y1="415.40" y2="415.40" stroke="#999" stroke-width="1"/>
<line x1="81" x2="85" y1="400.22" y2="400.22" stroke="#999" stroke-width="1"/>
<line x1="81" x2="85" y1="385.05" y2="385.05" stroke="#999" stroke-width="1"/>
<line x1="81" x2="85" y1="369.88" y2="369.88" stroke="#999" stroke-width="1"/>
<line x1="81" x2="85" y1="354.71" y2="354.71" stroke="#999" stroke-width="1"/>
<line x1="81" x2="85" y1="339.53" y2="339.53" stroke="#999" stroke-width="1"/>
<line x1="81" x2="85" y1="324.36" y2="324.36" stroke="#999" stroke-width="1"/>
<line x1="81" x2="85" y1="309.19" y2="309.19" stroke="#999" stroke-width="1"/>
<line x1="81" x2="85" y1="294.02" y2="294.02" stroke="#999" stroke-width="1"/>
<line x1="81" x2="85" y1="278.84" y2="278.84" stroke="#999" stroke-width="1"/>
<line x1="81" x2="85" y1="263.67" y2="263.67" stroke="#999" stroke-width="1"/>
<line x1="81" x2="85" y1="248.50" y2="248.50" stroke="#999" stroke-width="1"/>
<line x1="86" x2="915" y1="235" y2="235" stroke="#4a4a4a" stroke-width="1.6"/>
<line x1="914.5" x2="914.5" y1="235" y2="698.5" stroke="#666" stroke-width="1"/>
<line x1="85.8" x2="85.8" y1="234.2" y2="699.5" stroke="#2c2c2c" stroke-width="2.2"/>
<line x1="86" x2="915" y1="698.5" y2="698.5" stroke="#555" stroke-width="1.4"/>
<line x1="128.1" x2="872.58" y1="698.7" y2="698.7" stroke="#222" stroke-width="2"/>
<line x1="132.10" x2="132.10" y1="699.5" y2="703.5" stroke="#999" stroke-width="1"/>
<line x1="155.12" x2="155.12" y1="699.5" y2="702.5" stroke="#999" stroke-width="1"/>
<line x1="178.13" x2="178.13" y1="699.5" y2="703.5" stroke="#999" stroke-width="1"/>
<line x1="201.14" x2="201.14" y1="699.5" y2="702.5" stroke="#999" stroke-width="1"/>
<line x1="224.16" x2="224.16" y1="699.5" y2="703.5" stroke="#999" stroke-width="1"/>
<line x1="247.18" x2="247.18" y1="699.5" y2="702.5" stroke="#999" stroke-width="1"/>
<line x1="270.19" x2="270.19" y1="699.5" y2="703.5" stroke="#999" stroke-width="1"/>
<line x1="293.21" x2="293.21" y1="699.5" y2="702.5" stroke="#999" stroke-width="1"/>
<line x1="316.22" x2="316.22" y1="699.5" y2="703.5" stroke="#999" stroke-width="1"/>
<line x1="339.24" x2="339.24" y1="699.5" y2="702.5" stroke="#999" stroke-width="1"/>
<line x1="362.25" x2="362.25" y1="699.5" y2="703.5" stroke="#999" stroke-width="1"/>
<line x1="385.26" x2="385.26" y1="699.5" y2="702.5" stroke="#999" stroke-width="1"/>
<line x1="408.28" x2="408.28" y1="699.5" y2="703.5" stroke="#999" stroke-width="1"/>
<line x1="431.29" x2="431.29" y1="699.5" y2="702.5" stroke="#999" stroke-width="1"/>
<line x1="454.31" x2="454.31" y1="699.5" y2="703.5" stroke="#999" stroke-width="1"/>
<line x1="477.33" x2="477.33" y1="699.5" y2="702.5" stroke="#999" stroke-width="1"/>
<line x1="500.34" x2="500.34" y1="699.5" y2="703.5" stroke="#999" stroke-width="1"/>
<line x1="523.36" x2="523.36" y1="699.5" y2="702.5" stroke="#999" stroke-width="1"/>
<line x1="546.37" x2="546.37" y1="699.5" y2="703.5" stroke="#999" stroke-width="1"/>
<line x1="569.38" x2="569.38" y1="699.5" y2="702.5" stroke="#999" stroke-width="1"/>
<line x1="592.40" x2="592.40" y1="699.5" y2="703.5" stroke="#999" stroke-width="1"/>
<line x1="615.41" x2="615.41" y1="699.5" y2="702.5" stroke="#999" stroke-width="1"/>
<line x1="638.43" x2="638.43" y1="699.5" y2="703.5" stroke="#999" stroke-width="1"/>
<line x1="661.45" x2="661.45" y1="699.5" y2="702.5" stroke="#999" stroke-width="1"/>
<line x1="684.46" x2="684.46" y1="699.5" y2="703.5" stroke="#999" stroke-width="1"/>
<line x1="707.48" x2="707.48" y1="699.5" y2="702.5" stroke="#999" stroke-width="1"/>
<line x1="730.49" x2="730.49" y1="699.5" y2="703.5" stroke="#999" stroke-width="1"/>
<line x1="753.50" x2="753.50" y1="699.5" y2="702.5" stroke="#999" stroke-width="1"/>
<line x1="776.52" x2="776.52" y1="699.5" y2="703.5" stroke="#999" stroke-width="1"/>
<line x1="799.54" x2="799.54" y1="699.5" y2="702.5" stroke="#999" stroke-width="1"/>
<line x1="822.55" x2="822.55" y1="699.5" y2="703.5" stroke="#999" stroke-width="1"/>
<line x1="845.57" x2="845.57" y1="699.5" y2="702.5" stroke="#999" stroke-width="1"/>
<line x1="868.58" x2="868.58" y1="699.5" y2="703.5" stroke="#999" stroke-width="1"/>
<polyline points="132.10,494.50 178.13,482.50 224.16,480.00 270.19,515.25 316.22,495.75 362.25,493.00 408.28,495.75 454.31,482.75 500.34,482.75 546.37,482.75 592.40,482.75 638.43,482.75 684.46,645.25 730.49,645.25 776.52,645.25 822.55,689.00" fill="none" stroke="#a8b8d8" stroke-opacity="0.5" stroke-width="3.6" stroke-linejoin="round"/>
<polyline points="132.10,494.50 178.13,482.50 224.16,480.00 270.19,515.25 316.22,495.75 362.25,493.00 408.28,495.75 454.31,482.75 500.34,482.75 546.37,482.75 592.40,482.75 638.43,482.75 684.46,645.25 730.49,645.25 776.52,645.25 822.55,689.00" fill="none" stroke="#3c5b92" stroke-width="1.8" stroke-linejoin="round"/>
<ellipse cx="132.10" cy="494.50" rx="3.55" ry="4.6" fill="#3d62a8" stroke="#18284a" stroke-width="1.15"/>
<ellipse cx="178.13" cy="482.50" rx="3.55" ry="4.6" fill="#3d62a8" stroke="#18284a" stroke-width="1.15"/>
<ellipse cx="224.16" cy="480.00" rx="3.55" ry="4.6" fill="#3d62a8" stroke="#18284a" stroke-width="1.15"/>
<ellipse cx="270.19" cy="515.25" rx="3.55" ry="4.6" fill="#3d62a8" stroke="#18284a" stroke-width="1.15"/>
<ellipse cx="316.22" cy="495.75" rx="3.55" ry="4.6" fill="#3d62a8" stroke="#18284a" stroke-width="1.15"/>
<ellipse cx="362.25" cy="493.00" rx="3.55" ry="4.6" fill="#3d62a8" stroke="#18284a" stroke-width="1.15"/>
<ellipse cx="408.28" cy="495.75" rx="3.55" ry="4.6" fill="#3d62a8" stroke="#18284a" stroke-width="1.15"/>
<ellipse cx="454.31" cy="482.75" rx="3.55" ry="4.6" fill="#3d62a8" stroke="#18284a" stroke-width="1.15"/>
<ellipse cx="500.34" cy="482.75" rx="3.55" ry="4.6" fill="#3d62a8" stroke="#18284a" stroke-width="1.15"/>
<ellipse cx="546.37" cy="482.75" rx="3.55" ry="4.6" fill="#3d62a8" stroke="#18284a" stroke-width="1.15"/>
<ellipse cx="592.40" cy="482.75" rx="3.55" ry="4.6" fill="#3d62a8" stroke="#18284a" stroke-width="1.15"/>
<ellipse cx="638.43" cy="482.75" rx="3.55" ry="4.6" fill="#3d62a8" stroke="#18284a" stroke-width="1.15"/>
<ellipse cx="684.46" cy="645.25" rx="3.55" ry="4.6" fill="#3d62a8" stroke="#18284a" stroke-width="1.15"/>
<ellipse cx="730.49" cy="645.25" rx="3.55" ry="4.6" fill="#3d62a8" stroke="#18284a" stroke-width="1.15"/>
<ellipse cx="776.52" cy="645.25" rx="3.55" ry="4.6" fill="#3d62a8" stroke="#18284a" stroke-width="1.15"/>
<ellipse cx="822.55" cy="689.00" rx="3.55" ry="4.6" fill="#3d62a8" stroke="#18284a" stroke-width="1.15"/>
<polyline points="132.10,493.00 178.13,479.25 224.16,478.25 270.19,480.00 316.22,488.50 362.25,493.00 408.28,495.75 454.31,503.25 500.34,507.75 546.37,512.00 592.40,498.00 638.43,509.75 684.46,489.75 730.49,484.75 776.52,471.25 822.55,444.25" fill="none" stroke="#f9d4a3" stroke-opacity="0.5" stroke-width="3.6" stroke-linejoin="round"/>
<polyline points="132.10,493.00 178.13,479.25 224.16,478.25 270.19,480.00 316.22,488.50 362.25,493.00 408.28,495.75 454.31,503.25 500.34,507.75 546.37,512.00 592.40,498.00 638.43,509.75 684.46,489.75 730.49,484.75 776.52,471.25 822.55,444.25" fill="none" stroke="#ca8b37" stroke-width="1.8" stroke-linejoin="round"/>
<ellipse cx="132.10" cy="493.00" rx="3.55" ry="4.6" fill="#f2a033" stroke="#4a3008" stroke-width="1.15"/>
<ellipse cx="178.13" cy="479.25" rx="3.55" ry="4.6" fill="#f2a033" stroke="#4a3008" stroke-width="1.15"/>
<ellipse cx="224.16" cy="478.25" rx="3.55" ry="4.6" fill="#f2a033" stroke="#4a3008" stroke-width="1.15"/>
<ellipse cx="270.19" cy="480.00" rx="3.55" ry="4.6" fill="#f2a033" stroke="#4a3008" stroke-width="1.15"/>
<ellipse cx="316.22" cy="488.50" rx="3.55" ry="4.6" fill="#f2a033" stroke="#4a3008" stroke-width="1.15"/>
<ellipse cx="362.25" cy="493.00" rx="3.55" ry="4.6" fill="#f2a033" stroke="#4a3008" stroke-width="1.15"/>
<ellipse cx="408.28" cy="495.75" rx="3.55" ry="4.6" fill="#f2a033" stroke="#4a3008" stroke-width="1.15"/>
<ellipse cx="454.31" cy="503.25" rx="3.55" ry="4.6" fill="#f2a033" stroke="#4a3008" stroke-width="1.15"/>
<ellipse cx="500.34" cy="507.75" rx="3.55" ry="4.6" fill="#f2a033" stroke="#4a3008" stroke-width="1.15"/>
<ellipse cx="546.37" cy="512.00" rx="3.55" ry="4.6" fill="#f2a033" stroke="#4a3008" stroke-width="1.15"/>
<ellipse cx="592.40" cy="498.00" rx="3.55" ry="4.6" fill="#f2a033" stroke="#4a3008" stroke-width="1.15"/>
<ellipse cx="638.43" cy="509.75" rx="3.55" ry="4.6" fill="#f2a033" stroke="#4a3008" stroke-width="1.15"/>
<ellipse cx="684.46" cy="489.75" rx="3.55" ry="4.6" fill="#f2a033" stroke="#4a3008" stroke-width="1.15"/>
<ellipse cx="730.49" cy="484.75" rx="3.55" ry="4.6" fill="#f2a033" stroke="#4a3008" stroke-width="1.15"/>
<ellipse cx="776.52" cy="471.25" rx="3.55" ry="4.6" fill="#f2a033" stroke="#4a3008" stroke-width="1.15"/>
<ellipse cx="822.55" cy="444.25" rx="3.55" ry="4.6" fill="#f2a033" stroke="#4a3008" stroke-width="1.15"/>
<polyline points="132.10,482.75 178.13,467.75 224.16,466.00 270.19,467.75 316.22,477.50 362.25,480.75 408.28,486.50 454.31,493.50 500.34,499.50 546.37,504.00 592.40,490.25 638.43,502.00 684.46,480.50 730.49,476.25 776.52,462.50 822.55,437.00" fill="none" stroke="#f8b399" stroke-opacity="0.5" stroke-width="3.6" stroke-linejoin="round"/>
<polyline points="132.10,482.75 178.13,467.75 224.16,466.00 270.19,467.75 316.22,477.50 362.25,480.75 408.28,486.50 454.31,493.50 500.34,499.50 546.37,504.00 592.40,490.25 638.43,502.00 684.46,480.50 730.49,476.25 776.52,462.50 822.55,437.00" fill="none" stroke="#c85125" stroke-width="1.8" stroke-linejoin="round"/>
<ellipse cx="132.10" cy="482.75" rx="3.55" ry="4.6" fill="#f0561c" stroke="#4a1c08" stroke-width="1.15"/>
<ellipse cx="178.13" cy="467.75" rx="3.55" ry="4.6" fill="#f0561c" stroke="#4a1c08" stroke-width="1.15"/>
<ellipse cx="224.16" cy="466.00" rx="3.55" ry="4.6" fill="#f0561c" stroke="#4a1c08" stroke-width="1.15"/>
<ellipse cx="270.19" cy="467.75" rx="3.55" ry="4.6" fill="#f0561c" stroke="#4a1c08" stroke-width="1.15"/>
<ellipse cx="316.22" cy="477.50" rx="3.55" ry="4.6" fill="#f0561c" stroke="#4a1c08" stroke-width="1.15"/>
<ellipse cx="362.25" cy="480.75" rx="3.55" ry="4.6" fill="#f0561c" stroke="#4a1c08" stroke-width="1.15"/>
<ellipse cx="408.28" cy="486.50" rx="3.55" ry="4.6" fill="#f0561c" stroke="#4a1c08" stroke-width="1.15"/>
<ellipse cx="454.31" cy="493.50" rx="3.55" ry="4.6" fill="#f0561c" stroke="#4a1c08" stroke-width="1.15"/>
<ellipse cx="500.34" cy="499.50" rx="3.55" ry="4.6" fill="#f0561c" stroke="#4a1c08" stroke-width="1.15"/>
<ellipse cx="546.37" cy="504.00" rx="3.55" ry="4.6" fill="#f0561c" stroke="#4a1c08" stroke-width="1.15"/>
<ellipse cx="592.40" cy="490.25" rx="3.55" ry="4.6" fill="#f0561c" stroke="#4a1c08" stroke-width="1.15"/>
<ellipse cx="638.43" cy="502.00" rx="3.55" ry="4.6" fill="#f0561c" stroke="#4a1c08" stroke-width="1.15"/>
<ellipse cx="684.46" cy="480.50" rx="3.55" ry="4.6" fill="#f0561c" stroke="#4a1c08" stroke-width="1.15"/>
<ellipse cx="730.49" cy="476.25" rx="3.55" ry="4.6" fill="#f0561c" stroke="#4a1c08" stroke-width="1.15"/>
<ellipse cx="776.52" cy="462.50" rx="3.55" ry="4.6" fill="#f0561c" stroke="#4a1c08" stroke-width="1.15"/>
<ellipse cx="822.55" cy="437.00" rx="3.55" ry="4.6" fill="#f0561c" stroke="#4a1c08" stroke-width="1.15"/>
<polyline points="132.10,280.00 178.13,272.50 224.16,293.00 270.19,289.25 316.22,280.75 362.25,281.75 408.28,264.00 454.31,259.50 500.34,257.75 546.37,254.00 592.40,244.75 638.43,282.75 684.46,281.00 730.49,268.75 776.52,267.00 822.55,279.00" fill="none" stroke="#aed0db" stroke-opacity="0.5" stroke-width="3.6" stroke-linejoin="round"/>
<polyline points="132.10,280.00 178.13,272.50 224.16,293.00 270.19,289.25 316.22,280.75 362.25,281.75 408.28,264.00 454.31,259.50 500.34,257.75 546.37,254.00 592.40,244.75 638.43,282.75 684.46,281.00 730.49,268.75 776.52,267.00 822.55,279.00" fill="none" stroke="#478399" stroke-width="1.8" stroke-linejoin="round"/>
<ellipse cx="132.10" cy="280.00" rx="3.55" ry="4.6" fill="#4b96b0" stroke="#16323c" stroke-width="1.15"/>
<ellipse cx="178.13" cy="272.50" rx="3.55" ry="4.6" fill="#4b96b0" stroke="#16323c" stroke-width="1.15"/>
<ellipse cx="224.16" cy="293.00" rx="3.55" ry="4.6" fill="#4b96b0" stroke="#16323c" stroke-width="1.15"/>
<ellipse cx="270.19" cy="289.25" rx="3.55" ry="4.6" fill="#4b96b0" stroke="#16323c" stroke-width="1.15"/>
<ellipse cx="316.22" cy="280.75" rx="3.55" ry="4.6" fill="#4b96b0" stroke="#16323c" stroke-width="1.15"/>
<ellipse cx="362.25" cy="281.75" rx="3.55" ry="4.6" fill="#4b96b0" stroke="#16323c" stroke-width="1.15"/>
<ellipse cx="408.28" cy="264.00" rx="3.55" ry="4.6" fill="#4b96b0" stroke="#16323c" stroke-width="1.15"/>
<ellipse cx="454.31" cy="259.50" rx="3.55" ry="4.6" fill="#4b96b0" stroke="#16323c" stroke-width="1.15"/>
<ellipse cx="500.34" cy="257.75" rx="3.55" ry="4.6" fill="#4b96b0" stroke="#16323c" stroke-width="1.15"/>
<ellipse cx="546.37" cy="254.00" rx="3.55" ry="4.6" fill="#4b96b0" stroke="#16323c" stroke-width="1.15"/>
<ellipse cx="592.40" cy="244.75" rx="3.55" ry="4.6" fill="#4b96b0" stroke="#16323c" stroke-width="1.15"/>
<ellipse cx="638.43" cy="282.75" rx="3.55" ry="4.6" fill="#4b96b0" stroke="#16323c" stroke-width="1.15"/>
<ellipse cx="684.46" cy="281.00" rx="3.55" ry="4.6" fill="#4b96b0" stroke="#16323c" stroke-width="1.15"/>
<ellipse cx="730.49" cy="268.75" rx="3.55" ry="4.6" fill="#4b96b0" stroke="#16323c" stroke-width="1.15"/>
<ellipse cx="776.52" cy="267.00" rx="3.55" ry="4.6" fill="#4b96b0" stroke="#16323c" stroke-width="1.15"/>
<ellipse cx="822.55" cy="279.00" rx="3.55" ry="4.6" fill="#4b96b0" stroke="#16323c" stroke-width="1.15"/>
<polyline points="132.10,335.50 178.13,327.25 224.16,335.50 270.19,335.50 316.22,331.75 362.25,336.50 408.28,325.25 454.31,330.00 500.34,331.75 546.37,331.75 592.40,328.00 638.43,350.50 684.46,344.00 730.49,336.50 776.52,337.50 822.55,344.75" fill="none" stroke="#9da8bb" stroke-opacity="0.5" stroke-width="3.6" stroke-linejoin="round"/>
<polyline points="132.10,335.50 178.13,327.25 224.16,335.50 270.19,335.50 316.22,331.75 362.25,336.50 408.28,325.25 454.31,330.00 500.34,331.75 546.37,331.75 592.40,328.00 638.43,350.50 684.46,344.00 730.49,336.50 776.52,337.50 822.55,344.75" fill="none" stroke="#2a3e61" stroke-width="1.8" stroke-linejoin="round"/>
<ellipse cx="132.10" cy="335.50" rx="3.55" ry="4.6" fill="#263d68" stroke="#0c1424" stroke-width="1.15"/>
<ellipse cx="178.13" cy="327.25" rx="3.55" ry="4.6" fill="#263d68" stroke="#0c1424" stroke-width="1.15"/>
<ellipse cx="224.16" cy="335.50" rx="3.55" ry="4.6" fill="#263d68" stroke="#0c1424" stroke-width="1.15"/>
<ellipse cx="270.19" cy="335.50" rx="3.55" ry="4.6" fill="#263d68" stroke="#0c1424" stroke-width="1.15"/>
<ellipse cx="316.22" cy="331.75" rx="3.55" ry="4.6" fill="#263d68" stroke="#0c1424" stroke-width="1.15"/>
<ellipse cx="362.25" cy="336.50" rx="3.55" ry="4.6" fill="#263d68" stroke="#0c1424" stroke-width="1.15"/>
<ellipse cx="408.28" cy="325.25" rx="3.55" ry="4.6" fill="#263d68" stroke="#0c1424" stroke-width="1.15"/>
<ellipse cx="454.31" cy="330.00" rx="3.55" ry="4.6" fill="#263d68" stroke="#0c1424" stroke-width="1.15"/>
<ellipse cx="500.34" cy="331.75" rx="3.55" ry="4.6" fill="#263d68" stroke="#0c1424" stroke-width="1.15"/>
<ellipse cx="546.37" cy="331.75" rx="3.55" ry="4.6" fill="#263d68" stroke="#0c1424" stroke-width="1.15"/>
<ellipse cx="592.40" cy="328.00" rx="3.55" ry="4.6" fill="#263d68" stroke="#0c1424" stroke-width="1.15"/>
<ellipse cx="638.43" cy="350.50" rx="3.55" ry="4.6" fill="#263d68" stroke="#0c1424" stroke-width="1.15"/>
<ellipse cx="684.46" cy="344.00" rx="3.55" ry="4.6" fill="#263d68" stroke="#0c1424" stroke-width="1.15"/>
<ellipse cx="730.49" cy="336.50" rx="3.55" ry="4.6" fill="#263d68" stroke="#0c1424" stroke-width="1.15"/>
<ellipse cx="776.52" cy="337.50" rx="3.55" ry="4.6" fill="#263d68" stroke="#0c1424" stroke-width="1.15"/>
<ellipse cx="822.55" cy="344.75" rx="3.55" ry="4.6" fill="#263d68" stroke="#0c1424" stroke-width="1.15"/>
<polyline points="132.10,317.75 178.13,309.50 224.16,318.75 270.19,315.25 316.22,304.00 362.25,309.50 408.28,295.75 454.31,297.50 500.34,303.00 546.37,302.25 592.40,300.50 638.43,317.00 684.46,311.50 730.49,305.75 776.52,305.00 822.55,313.25" fill="none" stroke="#98c4b7" stroke-opacity="0.5" stroke-width="3.6" stroke-linejoin="round"/>
<polyline points="132.10,317.75 178.13,309.50 224.16,318.75 270.19,315.25 316.22,304.00 362.25,309.50 408.28,295.75 454.31,297.50 500.34,303.00 546.37,302.25 592.40,300.50 638.43,317.00 684.46,311.50 730.49,305.75 776.52,305.00 822.55,313.25" fill="none" stroke="#22705a" stroke-width="1.8" stroke-linejoin="round"/>
<ellipse cx="132.10" cy="317.75" rx="3.55" ry="4.6" fill="#1b7d5f" stroke="#0a2c20" stroke-width="1.15"/>
<ellipse cx="178.13" cy="309.50" rx="3.55" ry="4.6" fill="#1b7d5f" stroke="#0a2c20" stroke-width="1.15"/>
<ellipse cx="224.16" cy="318.75" rx="3.55" ry="4.6" fill="#1b7d5f" stroke="#0a2c20" stroke-width="1.15"/>
<ellipse cx="270.19" cy="315.25" rx="3.55" ry="4.6" fill="#1b7d5f" stroke="#0a2c20" stroke-width="1.15"/>
<ellipse cx="316.22" cy="304.00" rx="3.55" ry="4.6" fill="#1b7d5f" stroke="#0a2c20" stroke-width="1.15"/>
<ellipse cx="362.25" cy="309.50" rx="3.55" ry="4.6" fill="#1b7d5f" stroke="#0a2c20" stroke-width="1.15"/>
<ellipse cx="408.28" cy="295.75" rx="3.55" ry="4.6" fill="#1b7d5f" stroke="#0a2c20" stroke-width="1.15"/>
<ellipse cx="454.31" cy="297.50" rx="3.55" ry="4.6" fill="#1b7d5f" stroke="#0a2c20" stroke-width="1.15"/>
<ellipse cx="500.34" cy="303.00" rx="3.55" ry="4.6" fill="#1b7d5f" stroke="#0a2c20" stroke-width="1.15"/>
<ellipse cx="546.37" cy="302.25" rx="3.55" ry="4.6" fill="#1b7d5f" stroke="#0a2c20" stroke-width="1.15"/>
<ellipse cx="592.40" cy="300.50" rx="3.55" ry="4.6" fill="#1b7d5f" stroke="#0a2c20" stroke-width="1.15"/>
<ellipse cx="638.43" cy="317.00" rx="3.55" ry="4.6" fill="#1b7d5f" stroke="#0a2c20" stroke-width="1.15"/>
<ellipse cx="684.46" cy="311.50" rx="3.55" ry="4.6" fill="#1b7d5f" stroke="#0a2c20" stroke-width="1.15"/>
<ellipse cx="730.49" cy="305.75" rx="3.55" ry="4.6" fill="#1b7d5f" stroke="#0a2c20" stroke-width="1.15"/>
<ellipse cx="776.52" cy="305.00" rx="3.55" ry="4.6" fill="#1b7d5f" stroke="#0a2c20" stroke-width="1.15"/>
<ellipse cx="822.55" cy="313.25" rx="3.55" ry="4.6" fill="#1b7d5f" stroke="#0a2c20" stroke-width="1.15"/>
<text x="79.6" y="692.10" text-anchor="end" class="yl" textLength="5.3" lengthAdjust="spacingAndGlyphs">0</text>
<text x="79.6" y="676.93" text-anchor="end" class="yl" textLength="29.1" lengthAdjust="spacingAndGlyphs">50,000</text>
<text x="79.6" y="661.76" text-anchor="end" class="yl" textLength="34.3" lengthAdjust="spacingAndGlyphs">100,000</text>
<text x="79.6" y="646.58" text-anchor="end" class="yl" textLength="34.3" lengthAdjust="spacingAndGlyphs">150,000</text>
<text x="79.6" y="631.41" text-anchor="end" class="yl" textLength="34.3" lengthAdjust="spacingAndGlyphs">200,000</text>
<text x="79.6" y="616.24" text-anchor="end" class="yl" textLength="34.3" lengthAdjust="spacingAndGlyphs">250,000</text>
<text x="79.6" y="601.07" text-anchor="end" class="yl" textLength="34.3" lengthAdjust="spacingAndGlyphs">300,000</text>
<text x="79.6" y="585.89" text-anchor="end" class="yl" textLength="34.3" lengthAdjust="spacingAndGlyphs">350,000</text>
<text x="79.6" y="570.72" text-anchor="end" class="yl" textLength="34.3" lengthAdjust="spacingAndGlyphs">400,000</text>
<text x="79.6" y="555.55" text-anchor="end" class="yl" textLength="34.3" lengthAdjust="spacingAndGlyphs">450,000</text>
<text x="79.6" y="540.38" text-anchor="end" class="yl" textLength="34.3" lengthAdjust="spacingAndGlyphs">500,000</text>
<text x="79.6" y="525.20" text-anchor="end" class="yl" textLength="34.3" lengthAdjust="spacingAndGlyphs">550,000</text>
<text x="79.6" y="510.03" text-anchor="end" class="yl" textLength="34.3" lengthAdjust="spacingAndGlyphs">600,000</text>
<text x="79.6" y="494.86" text-anchor="end" class="yl" textLength="34.3" lengthAdjust="spacingAndGlyphs">650,000</text>
<text x="79.6" y="479.69" text-anchor="end" class="yl" textLength="34.3" lengthAdjust="spacingAndGlyphs">700,000</text>
<text x="79.6" y="464.51" text-anchor="end" class="yl" textLength="34.3" lengthAdjust="spacingAndGlyphs">750,000</text>
<text x="79.6" y="449.34" text-anchor="end" class="yl" textLength="34.3" lengthAdjust="spacingAndGlyphs">800,000</text>
<text x="79.6" y="434.17" text-anchor="end" class="yl" textLength="34.3" lengthAdjust="spacingAndGlyphs">850,000</text>
<text x="79.6" y="419.00" text-anchor="end" class="yl" textLength="34.3" lengthAdjust="spacingAndGlyphs">900,000</text>
<text x="79.6" y="403.82" text-anchor="end" class="yl" textLength="34.3" lengthAdjust="spacingAndGlyphs">950,000</text>
<text x="79.6" y="388.65" text-anchor="end" class="yl" textLength="42.3" lengthAdjust="spacingAndGlyphs">1,000,000</text>
<text x="79.6" y="373.48" text-anchor="end" class="yl" textLength="42.3" lengthAdjust="spacingAndGlyphs">1,050,000</text>
<text x="79.6" y="358.31" text-anchor="end" class="yl" textLength="42.3" lengthAdjust="spacingAndGlyphs">1,100,000</text>
<text x="79.6" y="343.13" text-anchor="end" class="yl" textLength="42.3" lengthAdjust="spacingAndGlyphs">1,150,000</text>
<text x="79.6" y="327.96" text-anchor="end" class="yl" textLength="42.3" lengthAdjust="spacingAndGlyphs">1,200,000</text>
<text x="79.6" y="312.79" text-anchor="end" class="yl" textLength="42.3" lengthAdjust="spacingAndGlyphs">1,250,000</text>
<text x="79.6" y="297.62" text-anchor="end" class="yl" textLength="42.3" lengthAdjust="spacingAndGlyphs">1,300,000</text>
<text x="79.6" y="282.44" text-anchor="end" class="yl" textLength="42.3" lengthAdjust="spacingAndGlyphs">1,350,000</text>
<text x="79.6" y="267.27" text-anchor="end" class="yl" textLength="42.3" lengthAdjust="spacingAndGlyphs">1,400,000</text>
<text x="79.6" y="252.10" text-anchor="end" class="yl" textLength="42.3" lengthAdjust="spacingAndGlyphs">1,450,000</text>
<text x="132.80" y="717" text-anchor="middle" class="xl" textLength="48.2" lengthAdjust="spacingAndGlyphs">1397/05/01</text>
<text x="224.86" y="717" text-anchor="middle" class="xl" textLength="48.2" lengthAdjust="spacingAndGlyphs">1397/05/03</text>
<text x="316.92" y="717" text-anchor="middle" class="xl" textLength="48.2" lengthAdjust="spacingAndGlyphs">1397/05/05</text>
<text x="408.98" y="717" text-anchor="middle" class="xl" textLength="48.2" lengthAdjust="spacingAndGlyphs">1397/05/07</text>
<text x="501.04" y="717" text-anchor="middle" class="xl" textLength="48.2" lengthAdjust="spacingAndGlyphs">1397/05/09</text>
<text x="593.10" y="717" text-anchor="middle" class="xl" textLength="48.2" lengthAdjust="spacingAndGlyphs">1397/05/11</text>
<text x="685.16" y="717" text-anchor="middle" class="xl" textLength="48.2" lengthAdjust="spacingAndGlyphs">1397/05/13</text>
<text x="777.22" y="717" text-anchor="middle" class="xl" textLength="48.2" lengthAdjust="spacingAndGlyphs">1397/05/15</text>
<text x="869.28" y="717" text-anchor="middle" class="xl" textLength="48.2" lengthAdjust="spacingAndGlyphs">1397/05/17</text>
<rect x="946.5" y="286" width="89" height="90" fill="#9a9a9a"/>
<rect x="944.5" y="283.8" width="89" height="89.6" fill="#fdfdfd" stroke="#4a4a4a" stroke-width="1.2"/>
<ellipse cx="952.5" cy="293.00" rx="3.9" ry="4.4" fill="#3d62a8" stroke="#18284a" stroke-width="1"/>
<text x="1029" y="296.40" text-anchor="start" class="lg" direction="rtl" textLength="66" lengthAdjust="spacingAndGlyphs">نیروگاه رشت - خط 1</text>
<ellipse cx="952.5" cy="306.95" rx="3.9" ry="4.4" fill="#f2a033" stroke="#4a3008" stroke-width="1"/>
<text x="1029" y="310.35" text-anchor="start" class="lg" direction="rtl" textLength="66" lengthAdjust="spacingAndGlyphs">نیروگاه رشت - خط 2</text>
<ellipse cx="952.5" cy="320.90" rx="3.9" ry="4.4" fill="#f0561c" stroke="#4a1c08" stroke-width="1"/>
<text x="1029" y="324.30" text-anchor="start" class="lg" direction="rtl" textLength="66" lengthAdjust="spacingAndGlyphs">نیروگاه رشت - خط 3</text>
<ellipse cx="952.5" cy="334.85" rx="3.9" ry="4.4" fill="#4b96b0" stroke="#16323c" stroke-width="1"/>
<text x="1029" y="338.25" text-anchor="start" class="lg" direction="rtl" textLength="66" lengthAdjust="spacingAndGlyphs">نیروگاه رشت - خط 4</text>
<ellipse cx="952.5" cy="348.80" rx="3.9" ry="4.4" fill="#263d68" stroke="#0c1424" stroke-width="1"/>
<text x="1029" y="352.20" text-anchor="start" class="lg" direction="rtl" textLength="66" lengthAdjust="spacingAndGlyphs">نیروگاه رشت - خط 5</text>
<ellipse cx="952.5" cy="362.75" rx="3.9" ry="4.4" fill="#1b7d5f" stroke="#0a2c20" stroke-width="1"/>
<text x="1029" y="366.15" text-anchor="start" class="lg" direction="rtl" textLength="66" lengthAdjust="spacingAndGlyphs">نیروگاه رشت - خط 6</text>
</svg>

<!-- bottom buttons -->
<div class="abs btn" style="left:8px;top:747px;width:96px;height:22px;background:#f6f4f6;border:1px solid #cfcbcf;"></div>
<div class="abs t r" style="right:1118.7px;top:750px;color:#8c888c;transform:scale(1.011,1.05)">خروجی اکسل...</div>
<svg class="abs" style="left:84px;top:750px" width="13" height="16" viewBox="0 0 13 16"><path d="M1.5 2.5 H8 L10.5 5 V14.5 H1.5 Z" fill="#fbfbfb" stroke="#b0acb0"/><rect x="5.5" y="7" width="6" height="7" fill="#fff" stroke="#6c686c"/><path d="M6.8 8.5 L10.2 12.5 M10.2 8.5 L6.8 12.5" stroke="#5c585c" stroke-width="1.2"/><path d="M8.5 1 l2 2" stroke="#6c686c" stroke-width="1.4"/></svg>
<div class="abs btn" style="left:109px;top:747px;width:97px;height:22px;background:#f6f4f6;border:1px solid #cfcbcf;"></div>
<div class="abs t r" style="right:1021.2px;top:750px;color:#8c888c;transform:scale(0.942,1.05)">ذخیره تصویر...</div>
<svg class="abs" style="left:181px;top:752px" width="13" height="12" viewBox="0 0 13 12"><rect x="0.9" y="0.9" width="11.4" height="10.4" fill="#e4e2e4" stroke="#807c80" stroke-width="1.3"/><path d="M3.4 9.8 V4.6 M5.7 9.8 V3.2 M8 9.8 V5.6 M10.2 9.8 V3.8" stroke="#8c888c" stroke-width="1.5"/></svg>

<!-- status bar -->
<div id="statusbar" class="abs"></div>
<div class="abs t r" style="right:12.5px;top:780px;font-size:10px;color:#111;transform:scale(0.817,1.05)">کاربر: Tamimi</div>
<div id="taskbar" class="abs"></div>
<div class="abs" style="left:16px;top:797px;width:12px;height:3px;border-radius:6px 6px 0 0;background:#9fc4e4;"></div>
<div class="abs" style="left:370px;top:796px;width:44px;height:4px;background:#b9bec2;"></div>
<div class="abs" style="left:417px;top:796px;width:43px;height:4px;background:#d9dcde;"></div>
<div class="abs" style="left:1137px;top:796px;width:63px;height:4px;background:#4c5a64;"></div>
</body>
</html>
